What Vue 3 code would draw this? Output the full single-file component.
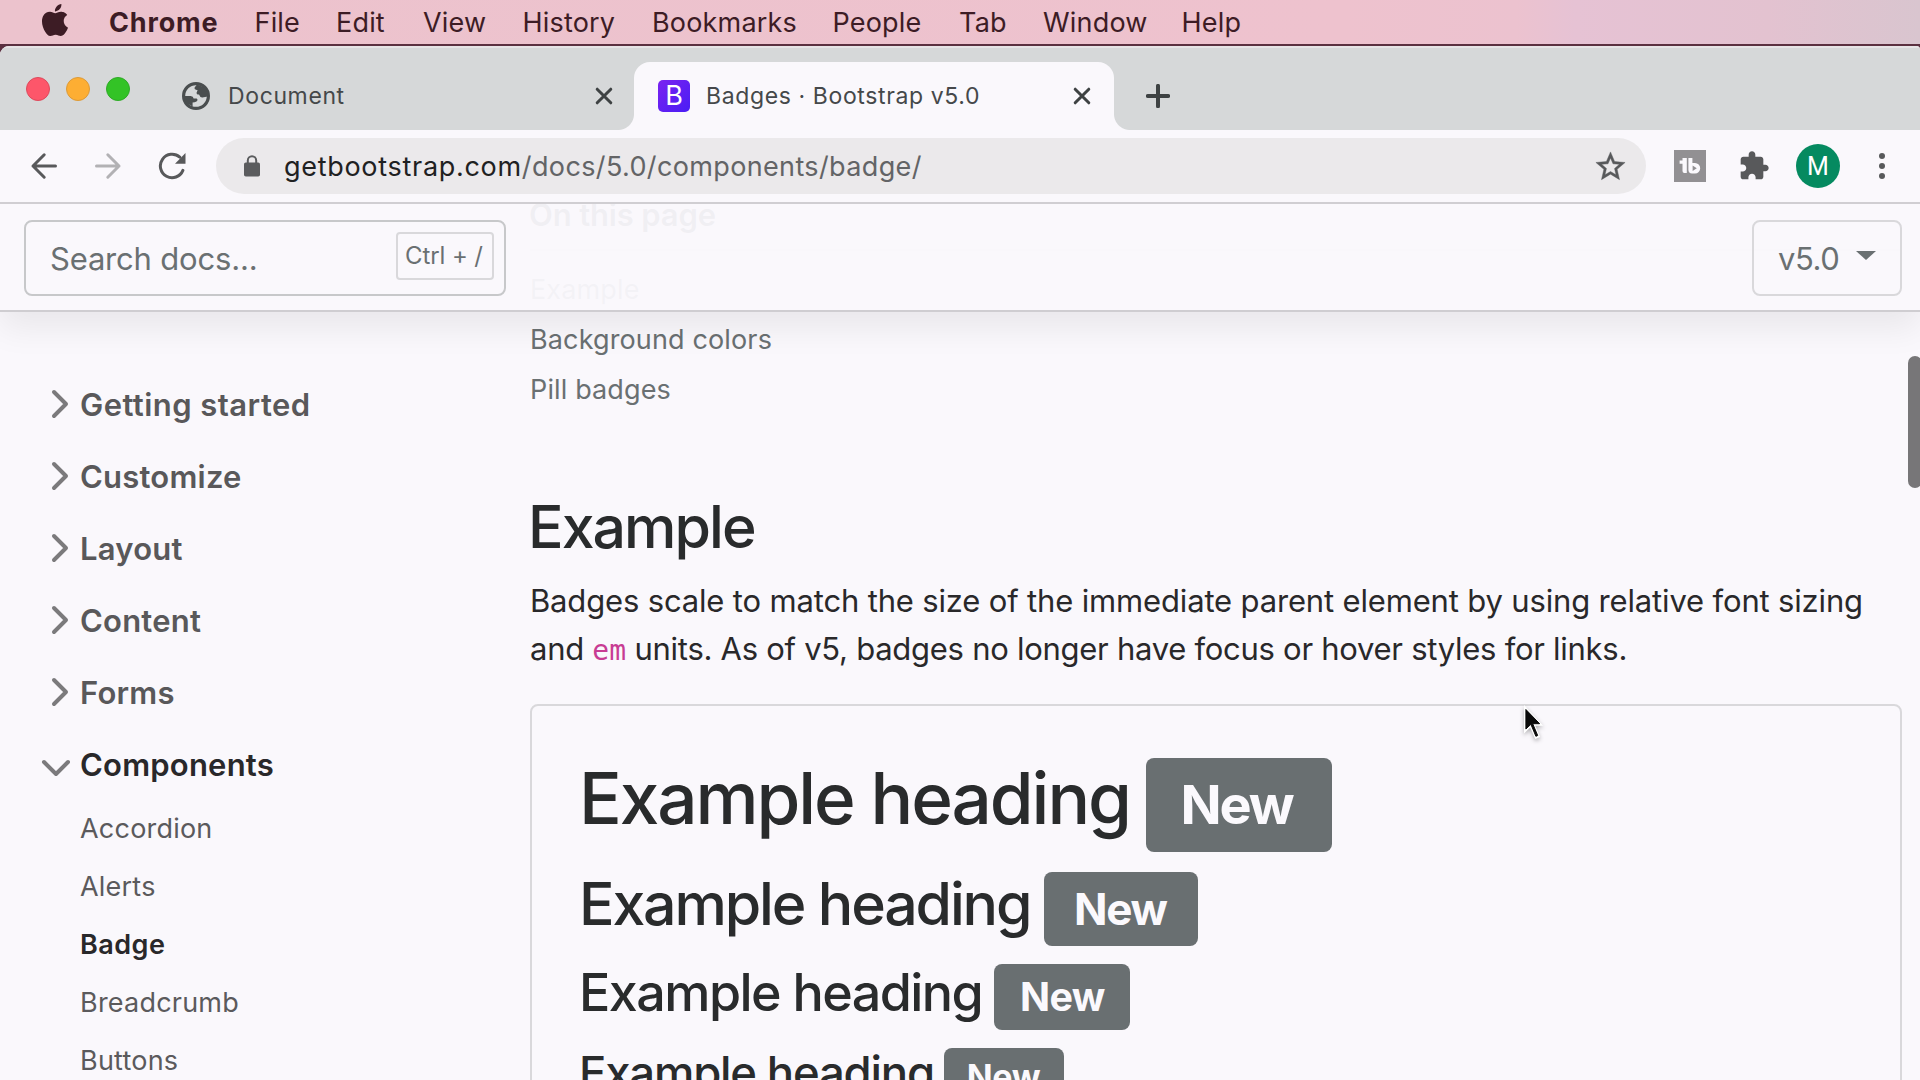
<script setup>
const menus = ['File', 'Edit', 'View', 'History', 'Bookmarks', 'People', 'Tab', 'Window', 'Help']

const sections = [
  { title: 'Getting started' },
  { title: 'Customize' },
  { title: 'Layout' },
  { title: 'Content' },
  { title: 'Forms' },
  { title: 'Components', open: true },
]
const components = ['Accordion', 'Alerts', 'Badge', 'Breadcrumb', 'Buttons']
const current = 'Badge'

const toc = ['Example', 'Background colors', 'Pill badges']
const headings = ['h1', 'h2', 'h3', 'h4']
</script>

<template>
  <div class="screen">
    <header class="menubar">
      <svg class="apple" viewBox="0 0 24 24" width="32" height="32">
        <path d="M12.152 6.896c-.948 0-2.415-1.078-3.96-1.04-2.04.027-3.91 1.183-4.961 3.014-2.117 3.675-.546 9.103 1.519 12.09 1.013 1.454 2.208 3.09 3.792 3.039 1.52-.065 2.09-.987 3.935-.987 1.831 0 2.35.987 3.96.948 1.637-.026 2.676-1.48 3.676-2.948 1.156-1.688 1.636-3.325 1.662-3.415-.039-.013-3.182-1.221-3.22-4.857-.026-3.04 2.48-4.494 2.597-4.559-1.429-2.09-3.623-2.324-4.39-2.376-2-.156-3.675 1.09-4.61 1.09zM15.53 3.83c.843-1.012 1.4-2.427 1.245-3.83-1.207.052-2.662.805-3.532 1.818-.78.896-1.454 2.338-1.273 3.714 1.338.104 2.715-.688 3.559-1.701" />
      </svg>
      <nav class="menus">
        <b class="app-name">Chrome</b>
        <span v-for="m in menus" :key="m">{{ m }}</span>
      </nav>
    </header>

    <div class="window">
      <div class="tabstrip">
        <div class="lights">
          <i class="light red"></i>
          <i class="light amber"></i>
          <i class="light green"></i>
        </div>
        <div class="tab">
          <svg class="globe" viewBox="0 0 28 28" width="28" height="28">
            <circle cx="14" cy="14" r="12.4" fill="none" stroke="#4a4e4f" stroke-width="3.2" />
            <path fill="#4a4e4f" d="M15 2.4 L12.6 5.6 Q12 7.4 14 7.8 L15.6 8.2 L14.6 10.4 Q14.4 12.6 17 12.6 Q18 15.6 20.4 15.4 L25.8 14.6 L24 6 Z" />
            <path fill="#4a4e4f" d="M2 14 H8.6 Q11.4 14.2 11.6 16.6 H14.6 Q15.8 17.2 15.4 18.6 Q15 20 12.6 20.2 L10.6 20.6 V24.6 L4 21 Z" />
          </svg>
          <span class="tab-title">Document</span>
          <svg class="close" viewBox="0 0 18 18" width="18" height="18"><path d="M2.2 2.2 15.8 15.8M15.8 2.2 2.2 15.8" /></svg>
        </div>
        <div class="tab active">
          <span class="bs-icon">B</span>
          <span class="tab-title">Badges · Bootstrap v5.0</span>
          <svg class="close" viewBox="0 0 18 18" width="18" height="18"><path d="M2.2 2.2 15.8 15.8M15.8 2.2 2.2 15.8" /></svg>
        </div>
        <svg class="plus" viewBox="0 0 24 24" width="24" height="24"><path d="M12 1.8V22.2M1.8 12H22.2" /></svg>
      </div>

      <div class="toolbar">
        <svg class="nav-icon back" viewBox="0 0 28 28" width="28" height="28"><path d="M14.2 2.8 3 14 14.2 25.2M3 14H25.5" /></svg>
        <svg class="nav-icon forward" viewBox="0 0 28 28" width="28" height="28"><path d="M13.8 2.8 25 14 13.8 25.2M25 14H2.5" /></svg>
        <svg class="nav-icon reload" viewBox="0 0 28 28" width="28" height="28">
          <path d="M24.9 18.4A11.7 11.7 0 1 1 21.8 5.2" />
          <path class="solid" d="M27.5 1V11.7H17Z" />
        </svg>
        <div class="omnibox">
          <svg class="lock" viewBox="0 0 16 22" width="16" height="22">
            <rect x="0" y="7.5" width="16" height="14" rx="1.8" fill="#5b5c5e" />
            <path d="M3.8 8V5.4a4.2 4.2 0 0 1 8.4 0V8" fill="none" stroke="#5b5c5e" stroke-width="2" />
          </svg>
          <span class="url"><span class="host">getbootstrap.com</span><span class="path">/docs/5.0/components/badge/</span></span>
          <svg class="star" viewBox="0 0 24 24" width="35" height="35">
            <path d="M22 9.24l-7.19-.62L12 2 9.19 8.63 2 9.24l5.46 4.73L5.82 21 12 17.27 18.18 21l-1.63-7.03L22 9.24zM12 15.4l-3.76 2.27 1-4.28-3.32-2.88 4.38-.38L12 6.1l1.71 4.04 4.38.38-3.32 2.88 1 4.28L12 15.4z" />
          </svg>
        </div>
        <svg class="tubebuddy" viewBox="0 0 32 32" width="32" height="32">
          <rect width="32" height="32" fill="#929093" />
          <path fill="#fbf9fd" d="M8.5 8H12.8V23H10.4Q8.5 23 8.5 21V13.8H5.6V10.4H8.5ZM14.4 8H18.4V13H21A5.2 5.2 0 0 1 21 23.4H18Q14.4 23.4 14.4 19.8Z" />
          <path fill="#929093" d="M18.6 15.4 22.8 18.2 18.6 21Z" />
        </svg>
        <svg class="puzzle" viewBox="0 0 24 24" width="32" height="32">
          <path d="M20.5 11H19V7c0-1.1-.9-2-2-2h-4V3.5C13 2.12 11.88 1 10.5 1S8 2.12 8 3.5V5H4c-1.1 0-1.99.9-1.99 2v3.8H3.5c1.49 0 2.7 1.21 2.7 2.7s-1.21 2.7-2.7 2.7H2V20c0 1.1.9 2 2 2h3.8v-1.5c0-1.49 1.21-2.7 2.7-2.7 1.49 0 2.7 1.21 2.7 2.7V22H17c1.1 0 2-.9 2-2v-4h1.5c1.38 0 2.5-1.12 2.5-2.5S21.88 11 20.5 11z" />
        </svg>
        <span class="avatar">M</span>
        <span class="dots"><i></i><i></i><i></i></span>
      </div>

      <div class="page">
        <div class="docs-nav">
          <div class="search">
            <span class="placeholder">Search docs...</span>
            <kbd class="shortcut">Ctrl + /</kbd>
          </div>
          <div class="version">
            <span class="placeholder">v5.0</span>
            <i class="caret"></i>
          </div>
        </div>

        <div class="columns">
          <aside class="sidebar">
            <div v-for="s in sections" :key="s.title" class="section" :class="{ open: s.open }">
              <svg class="chevron" viewBox="0 0 16 16" width="32" height="32"><path d="M5 14l6-6-6-6" /></svg>
              <span>{{ s.title }}</span>
            </div>
            <ul class="links">
              <li v-for="c in components" :key="c" :class="{ current: c === current }">{{ c }}</li>
            </ul>
          </aside>

          <main class="main">
            <strong class="toc-title">On this page</strong>
            <hr class="toc-rule" />
            <ul class="toc">
              <li v-for="t in toc" :key="t">{{ t }}</li>
            </ul>

            <h2 class="title">Example</h2>
            <p class="lead">Badges scale to match the size of the immediate parent element by using relative font sizing <span class="tight">and <code>em</code> units. As of v5, badges no longer have focus or hover styles for links.</span></p>

            <div class="example">
              <component :is="h" v-for="h in headings" :key="h" class="sample" :class="'sample-' + h">
                <span class="sample-text">Example heading</span>
                <span class="badge">New</span>
              </component>
            </div>
          </main>
        </div>
        <div class="scroll-thumb"></div>
      </div>
    </div>

    <svg class="cursor" viewBox="0 0 26 40" width="26" height="40">
      <path d="M3 3V31.5L9.2 25.6L14.2 37L19.2 34.9L14.3 23.8H22.2Z" fill="#fff" />
      <path d="M4.9 7.5V27L9.9 22.3L14.9 34.3L16.7 33.5L11.7 21.7H18.6Z" fill="#0a0a0a" stroke="#0a0a0a" stroke-width="1" />
    </svg>
  </div>
</template>

<style>
body {
  margin: 0;
  overflow: hidden;
}
</style>

<style scoped>
.screen {
  position: relative;
  display: flex;
  flex-direction: column;
  width: 1920px;
  height: 1080px;
  overflow: hidden;
  background: #5b3040;
  font-family: Inter, "Liberation Sans", sans-serif;
  color: #292b2c;
}
svg {
  display: block;
  flex: none;
}
ul {
  margin: 0;
  padding: 0;
  list-style: none;
}

/* menu bar */
.menubar {
  display: flex;
  align-items: center;
  flex: none;
  height: 44px;
  margin-bottom: 2px;
  padding-left: 39px;
  background: linear-gradient(90deg, #ecc3cd 0%, #eec2ce 70%, #ecc2cf 79%, #e6c2d4 82%, #e3c2d0 92%, #d9c5cf 100%);
  color: #3d1c25;
  font-size: 27px;
  letter-spacing: 0.007em;
}
.apple {
  margin: -4px 38px 0 0;
  fill: #3d1c25;
}
.menus {
  display: grid;
  grid-template-columns: 145.5px 81.5px 87px 99.5px 129.5px 180.5px 126.5px 84px 138.5px auto;
  height: 36px;
  margin-top: -6px;
  line-height: 44px;
}
.app-name {
  letter-spacing: 0.031em;
}

/* browser frame */
.window {
  display: flex;
  flex-direction: column;
  flex: 1;
  min-height: 0;
  border-radius: 9px 4px 0 0;
  overflow: hidden;
  background: #faf8fc;
}
.tabstrip {
  display: flex;
  align-items: center;
  flex: none;
  box-sizing: border-box;
  height: 84px;
  padding: 16px 0 0 26px;
  background: #d6d8d9;
  box-shadow: inset 0 2px 0 #e7e4e6;
}
.lights {
  display: flex;
  gap: 16px;
  margin-top: -14px;
}
.light {
  box-sizing: border-box;
  width: 24px;
  height: 24px;
  border-radius: 50%;
}
.red {
  background: #fd566a;
  border: 1px solid #dd4a5c;
}
.amber {
  background: #fdae33;
  border: 1px solid #dc9a38;
}
.green {
  background: #33c326;
  border: 1px solid #2faa27;
}
.tab {
  position: relative;
  display: flex;
  align-items: center;
  box-sizing: border-box;
  width: 504px;
  height: 68px;
  padding: 0 21px 0 52px;
  color: #45484a;
  font-size: 23px;
  letter-spacing: 0.027em;
}
.tab-title {
  flex: 1;
  margin-left: 18px;
  white-space: nowrap;
}
.close path,
.plus path {
  fill: none;
  stroke: #3e4243;
  stroke-width: 3;
  stroke-linecap: round;
}
.plus path {
  stroke-width: 4;
}
.active {
  width: 480px;
  padding: 0 23px 0 24px;
  border-radius: 16px 16px 0 0;
  background: #faf8fc;
}
.active .tab-title {
  margin-left: 16px;
}
.active::before,
.active::after {
  content: "";
  position: absolute;
  bottom: 0;
  width: 16px;
  height: 16px;
}
.active::before {
  right: 100%;
  background: radial-gradient(circle at 0 0, transparent 15.5px, #faf8fc 16.5px);
}
.active::after {
  left: 100%;
  background: radial-gradient(circle at 100% 0, transparent 15.5px, #faf8fc 16.5px);
}
.bs-icon {
  width: 32px;
  height: 32px;
  border-radius: 5px;
  background: linear-gradient(135deg, #7a22f0, #4a1df5);
  color: #fff;
  font-size: 27px;
  line-height: 32px;
  letter-spacing: 0;
  text-align: center;
}
.plus {
  margin-left: 32px;
}

/* toolbar */
.toolbar {
  display: flex;
  align-items: center;
  flex: none;
  height: 72px;
  padding-left: 30px;
  border-bottom: 2px solid #d0ced2;
}
.nav-icon {
  fill: none;
  stroke: #58595b;
  stroke-width: 3;
  stroke-linecap: round;
  stroke-linejoin: round;
}
.solid {
  fill: #58595b;
  stroke: none;
}
.forward {
  margin-left: 36px;
  stroke: #b2b1b4;
}
.reload {
  margin-left: 36px;
}
.omnibox {
  display: flex;
  align-items: center;
  box-sizing: border-box;
  width: 1430px;
  height: 56px;
  margin-left: 30px;
  padding: 0 18px 0 28px;
  border-radius: 28px;
  background: #ebe9eb;
  font-size: 27px;
}
.url {
  flex: 1;
  margin-left: 24px;
  white-space: nowrap;
}
.host {
  color: #1f2122;
  letter-spacing: 0.026em;
}
.path {
  color: #636466;
  letter-spacing: 0.0135em;
}
.star,
.puzzle {
  fill: #58595b;
}
.star {
  stroke: #58595b;
  stroke-width: 0.3;
}
.tubebuddy {
  margin-left: 28px;
}
.puzzle {
  margin-left: 32px;
}
.avatar {
  width: 44px;
  height: 44px;
  margin-left: 26px;
  border-radius: 50%;
  background: #058a60;
  color: #fff;
  font-family: Roboto, sans-serif;
  font-size: 25px;
  line-height: 45px;
  text-align: center;
}
.dots {
  display: flex;
  flex-direction: column;
  gap: 4px;
  margin-left: 39px;
}
.dots i {
  width: 6px;
  height: 6px;
  border-radius: 50%;
  background: #58595b;
}

/* docs page */
.page {
  position: relative;
  flex: 1;
  min-height: 0;
  overflow: hidden;
}
.docs-nav {
  position: absolute;
  z-index: 2;
  top: 0;
  left: 0;
  right: 0;
  display: flex;
  justify-content: space-between;
  align-items: center;
  height: 105px;
  padding: 1px 18px 0 24px;
  border-bottom: 2px solid #cfcdd1;
  background: rgba(250, 248, 252, 0.955);
  box-shadow: 0 16px 32px rgba(0, 0, 0, 0.07);
}
.search,
.version {
  display: flex;
  align-items: center;
  box-sizing: border-box;
  height: 76px;
  border: 2px solid #d9d8db;
  border-radius: 8px;
  color: #6a7072;
  font-size: 31px;
}
.placeholder {
  padding-top: 2px;
}
.search {
  justify-content: space-between;
  width: 482px;
  padding: 0 10px 0 24px;
  border-color: #c7c8ca;
  letter-spacing: -0.006em;
}
.shortcut {
  box-sizing: border-box;
  width: 98px;
  height: 48px;
  margin-top: -4px;
  padding-right: 2px;
  border: 2px solid #d9d8db;
  border-radius: 4px;
  font-family: inherit;
  font-size: 24px;
  line-height: 43px;
  letter-spacing: -0.004em;
  text-align: center;
  white-space: nowrap;
}
.version {
  width: 150px;
  padding-left: 24px;
  letter-spacing: -0.014em;
}
.caret {
  margin: -4px 0 0 17px;
  border: 10px solid transparent;
  border-top: 9px solid #6a7072;
  border-bottom: 0;
}
.columns {
  display: flex;
}
.sidebar {
  flex: none;
  box-sizing: border-box;
  width: 530px;
  padding: 164px 0 0 44px;
}
.section {
  display: flex;
  align-items: center;
  gap: 4px;
  height: 72px;
  color: #59585a;
  font-size: 31px;
  font-weight: 600;
  letter-spacing: 0.007em;
}
.section:first-child {
  letter-spacing: 0.0145em;
}
.chevron path {
  fill: none;
  stroke: #7b7a7c;
  stroke-width: 2;
  stroke-linecap: round;
  stroke-linejoin: round;
}
.section.open {
  color: #29282a;
}
.open .chevron {
  transform: rotate(90deg);
  transform-origin: 12px 50%;
}
.links {
  margin-left: 36px;
  color: #5b5a5c;
  font-size: 27px;
  line-height: 58px;
  letter-spacing: 0.008em;
}
.current {
  color: #29282a;
  font-weight: 600;
  letter-spacing: 0.018em;
}
.main {
  flex: none;
  width: 1372px;
  padding-top: 1px;
}
.toc-title {
  display: block;
  margin: -9px 0 0 -1px;
  font-size: 31px;
  line-height: 38px;
  font-weight: 600;
  letter-spacing: -0.005em;
}
.toc-rule {
  height: 2px;
  margin: 15px 0 14px;
  border: 0;
  background: #dedde0;
}
.toc {
  color: #6a7072;
  font-size: 27px;
  line-height: 50px;
  letter-spacing: 0.005em;
}
.title {
  margin: 76px 0 0 -2px;
  font-size: 59px;
  line-height: 72px;
  font-weight: 500;
  letter-spacing: -0.033em;
}
.lead {
  margin: 14px 0 31px;
  color: #29282a;
  font-size: 31px;
  line-height: 48px;
  letter-spacing: -0.0052em;
}
.tight {
  letter-spacing: -0.0088em;
}
code {
  color: #c83c93;
  font-family: "DejaVu Sans Mono", monospace;
  font-size: 28px;
  line-height: 1;
  letter-spacing: 0;
}
.example {
  box-sizing: border-box;
  width: 1372px;
  height: 600px;
  padding: 52px 0 0 47px;
  border: 2px solid #d9d8db;
  border-radius: 8px;
}
.sample {
  display: flex;
  align-items: baseline;
  margin: 0;
  font-weight: 500;
  line-height: 1;
  white-space: nowrap;
}
.badge {
  box-sizing: border-box;
  padding-right: 1px;
  border-radius: 8px;
  background: #696f71;
  color: #fbf9fd;
  font-weight: 700;
  text-align: center;
}
.sample-h1 {
  height: 94px;
  font-size: 71px;
  letter-spacing: -0.0292em;
}
.sample-h1 .badge {
  width: 186px;
  margin-left: 16px;
  padding-right: 5px;
  font-size: 54px;
  line-height: 94px;
  letter-spacing: -0.042em;
}
.sample-h2 {
  height: 74px;
  margin-top: 20px;
  font-size: 59px;
  letter-spacing: -0.0365em;
}
.sample-h2 .badge {
  width: 154px;
  margin-left: 14px;
  padding-right: 2px;
  font-size: 44px;
  line-height: 74px;
  letter-spacing: -0.03em;
}
.sample-h3 {
  height: 66px;
  margin-top: 18px;
  font-size: 52px;
  letter-spacing: -0.0295em;
}
.sample-h3 .badge {
  width: 136px;
  margin-left: 12px;
  padding-right: 0;
  font-size: 39.5px;
  line-height: 66px;
  letter-spacing: -0.018em;
}
.sample-h4 {
  height: 58px;
  margin-top: 18px;
  font-size: 45.5px;
  letter-spacing: -0.0265em;
}
.sample-h4 .badge {
  width: 120px;
  margin-left: 10px;
  font-size: 34px;
  line-height: 58px;
  letter-spacing: -0.01em;
}
.scroll-thumb {
  position: absolute;
  top: 152px;
  right: -2px;
  width: 14px;
  height: 132px;
  border-radius: 7px;
  background: #777678;
}
.cursor {
  position: absolute;
  left: 1521px;
  top: 702px;
  filter: drop-shadow(0 2px 2px rgba(0, 0, 0, 0.3));
}
</style>
